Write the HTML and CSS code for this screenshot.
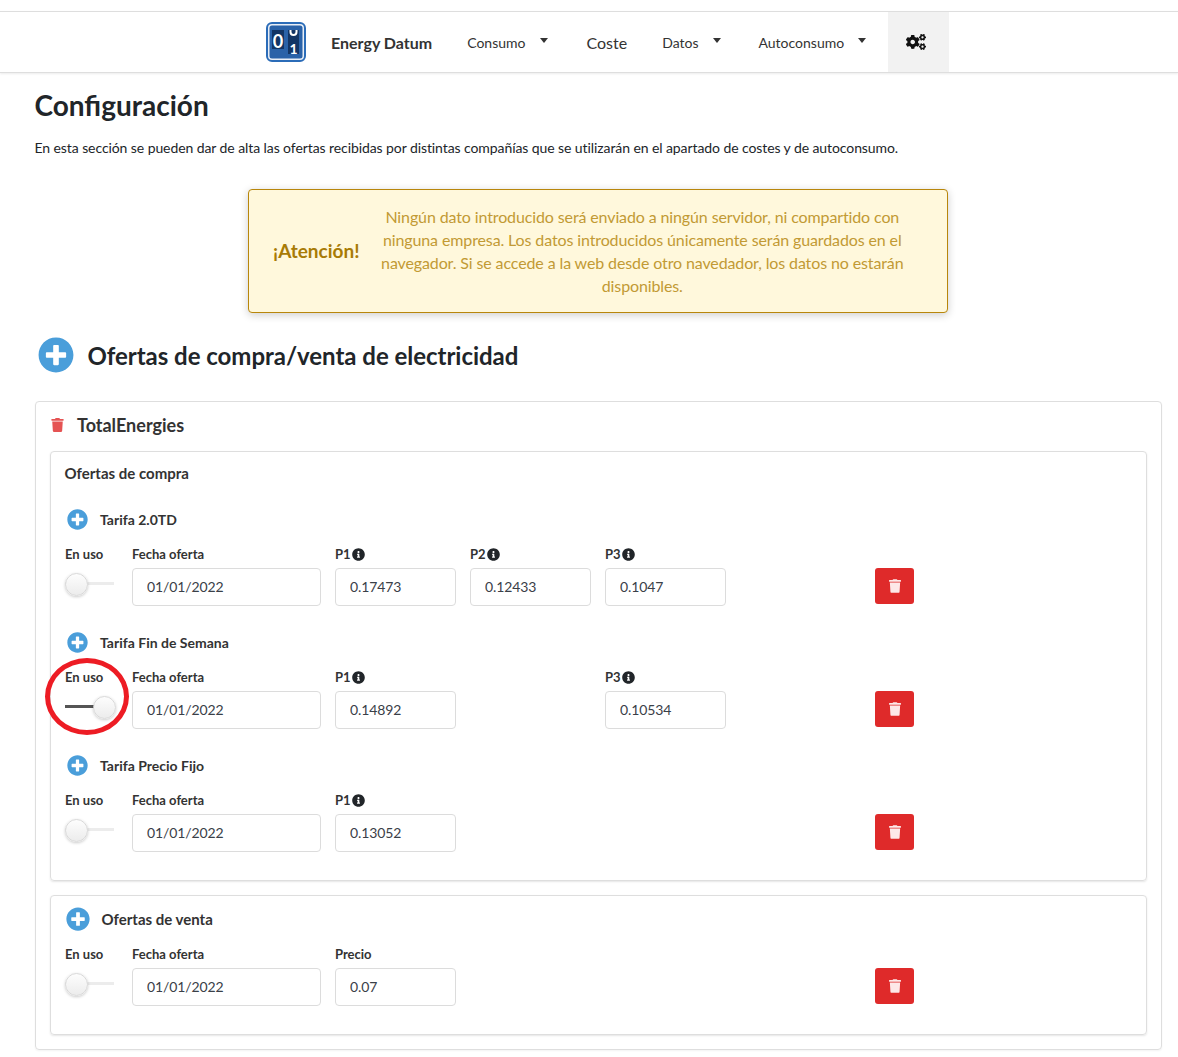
FILE: index.html
```html
<!DOCTYPE html>
<html lang="es">

<head>
    <title>Energy Datum - Configuración</title>
    <meta charset="utf-8">
    <link rel="stylesheet" href="styles.css">
</head>

<body>
    <svg class="defs" width="0" height="0">
        <symbol id="i-plus" viewBox="0 0 512 512"><path fill="currentColor" d="M256 8C119 8 8 119 8 256s111 248 248 248 248-111 248-248S393 8 256 8zm144 276c0 6.6-5.4 12-12 12h-92v92c0 6.6-5.4 12-12 12h-56c-6.6 0-12-5.4-12-12v-92h-92c-6.6 0-12-5.4-12-12v-56c0-6.6 5.4-12 12-12h92v-92c0-6.6 5.4-12 12-12h56c6.6 0 12 5.4 12 12v92h92c6.6 0 12 5.4 12 12v56z"/></symbol>
        <symbol id="i-trash" viewBox="0 0 448 512"><path fill="currentColor" d="M432 32H312l-9.4-18.7A24 24 0 0 0 281.1 0H166.8a23.72 23.72 0 0 0-21.4 13.3L136 32H16A16 16 0 0 0 0 48v32a16 16 0 0 0 16 16h416a16 16 0 0 0 16-16V48a16 16 0 0 0-16-16zM53.2 467a48 48 0 0 0 47.9 45h245.8a48 48 0 0 0 47.9-45L416 128H32z"/></symbol>
        <symbol id="i-info" viewBox="0 0 512 512"><path fill="currentColor" d="M256 8C119 8 8 119.1 8 256c0 137 111 248 248 248s248-111 248-248C504 119.1 393 8 256 8zm0 110c23.2 0 42 18.8 42 42s-18.8 42-42 42-42-18.8-42-42 18.8-42 42-42zm56 254c0 6.6-5.4 12-12 12h-88c-6.6 0-12-5.4-12-12v-24c0-6.6 5.4-12 12-12h12v-64h-12c-6.6 0-12-5.4-12-12v-24c0-6.6 5.4-12 12-12h64c6.6 0 12 5.4 12 12v100h12c6.6 0 12 5.4 12 12v24z"/></symbol>
    </svg>

    <nav class="navbar">
        <svg class="logo" width="40" height="40" viewBox="0 0 40 40">
            <rect x="1" y="1" width="38" height="38" rx="5" fill="#e8eef6" stroke="#2b6cb8" stroke-width="2"/>
            <rect x="3.5" y="3.5" width="33" height="33" rx="2.5" fill="#2a62a8"/>
            <rect x="6" y="8" width="12" height="19" fill="#123565"/>
            <rect x="22" y="8" width="11" height="24" fill="#123565"/>
            <text x="12" y="25.5" class="logo-digit" text-anchor="middle">0</text>
            <path d="M24.5 8v2a3 3 0 0 0 6 0V8" fill="none" stroke="#fff" stroke-width="2"/>
            <text x="27.5" y="31.5" class="logo-digit logo-digit-small" text-anchor="middle">1</text>
        </svg>
        <a class="brand" href="#">Energy Datum</a>
        <a class="nav-item nav-consumo" href="#">Consumo<span class="caret"></span></a>
        <a class="nav-item nav-coste" href="#">Coste</a>
        <a class="nav-item nav-datos" href="#">Datos<span class="caret"></span></a>
        <a class="nav-item nav-auto" href="#">Autoconsumo<span class="caret"></span></a>
        <a class="nav-config" href="#">
            <svg width="20" height="16" viewBox="0 0 640 512"><path fill="#111" d="M512.1 191l-8.2 14.3c-3 5.3-9.4 7.5-15.1 5.4-11.8-4.4-22.6-10.7-32.1-18.6-4.6-3.8-5.8-10.5-2.8-15.7l8.2-14.3c-6.9-8-12.3-17.3-15.9-27.4h-16.5c-6 0-11.2-4.3-12.2-10.3-2-12-2.1-24.6 0-37.1 1-6 6.2-10.4 12.2-10.4h16.5c3.6-10.1 9-19.4 15.9-27.4l-8.2-14.3c-3-5.2-1.9-11.9 2.8-15.7 9.5-7.9 20.4-14.2 32.1-18.6 5.7-2.1 12.1.1 15.1 5.4l8.2 14.3c10.5-1.9 21.2-1.9 31.7 0L552 6.3c3-5.3 9.4-7.5 15.1-5.4 11.8 4.4 22.6 10.7 32.1 18.6 4.6 3.8 5.8 10.5 2.8 15.7l-8.2 14.3c6.9 8 12.3 17.3 15.9 27.4h16.5c6 0 11.2 4.3 12.2 10.3 2 12 2.1 24.6 0 37.1-1 6-6.2 10.4-12.2 10.4h-16.5c-3.6 10.1-9 19.4-15.9 27.4l8.2 14.3c3 5.2 1.9 11.9-2.8 15.7-9.5 7.9-20.4 14.2-32.1 18.6-5.7 2.1-12.1-.1-15.1-5.4l-8.2-14.3c-10.4 1.9-21.2 1.9-31.7 0zm-10.5-58.8c38.5 29.6 82.4-14.3 52.8-52.8-38.5-29.7-82.4 14.3-52.8 52.8zM386.3 286.1l33.7 16.8c10.1 5.8 14.5 18.1 10.5 29.1-8.9 24.2-26.4 46.4-42.6 65.8-7.4 8.9-20.2 11.1-30.3 5.3l-29.1-16.8c-16 13.7-34.6 24.6-54.9 31.7v33.6c0 11.6-8.3 21.6-19.7 23.6-24.6 4.2-50.4 4.4-75.9 0-11.5-2-20-11.9-20-23.6V418c-20.3-7.2-38.9-18-54.9-31.7L74 403c-10 5.8-22.9 3.6-30.3-5.3-16.2-19.4-33.3-41.6-42.2-65.7-4-10.9.4-23.2 10.5-29.1l33.3-16.8c-3.9-20.9-3.9-42.4 0-63.4L12 205.8c-10.1-5.8-14.6-18.1-10.5-29 8.9-24.2 26-46.4 42.2-65.8 7.4-8.9 20.2-11.1 30.3-5.3l29.1 16.8c16-13.7 34.6-24.6 54.9-31.7V57.1c0-11.5 8.2-21.5 19.6-23.5 24.6-4.2 50.5-4.4 76-.1 11.5 2 20 11.9 20 23.6v33.6c20.3 7.2 38.9 18 54.9 31.7l29.1-16.8c10-5.8 22.9-3.6 30.3 5.3 16.2 19.4 33.2 41.6 42.1 65.8 4 10.9.1 23.2-10 29.1l-33.7 16.8c3.9 21 3.9 42.5 0 63.5zm-117.6 21.1c59.2-77-28.7-164.9-105.7-105.7-59.2 77 28.7 164.9 105.7 105.7zm243.4 182.7l-8.2 14.3c-3 5.3-9.4 7.5-15.1 5.4-11.8-4.4-22.6-10.7-32.1-18.6-4.6-3.8-5.8-10.5-2.8-15.7l8.2-14.3c-6.9-8-12.3-17.3-15.9-27.4h-16.5c-6 0-11.2-4.3-12.2-10.3-2-12-2.1-24.6 0-37.1 1-6 6.2-10.4 12.2-10.4h16.5c3.6-10.1 9-19.4 15.9-27.4l-8.2-14.3c-3-5.2-1.9-11.9 2.8-15.7 9.5-7.9 20.4-14.2 32.1-18.6 5.7-2.1 12.1.1 15.1 5.4l8.2 14.3c10.5-1.9 21.2-1.9 31.7 0l8.2-14.3c3-5.3 9.4-7.5 15.1-5.4 11.8 4.4 22.6 10.7 32.1 18.6 4.6 3.8 5.8 10.5 2.8 15.7l-8.2 14.3c6.9 8 12.3 17.3 15.9 27.4h16.5c6 0 11.2 4.3 12.2 10.3 2 12 2.1 24.6 0 37.1-1 6-6.2 10.4-12.2 10.4h-16.5c-3.6 10.1-9 19.4-15.9 27.4l8.2 14.3c3 5.2 1.9 11.9-2.8 15.7-9.5 7.9-20.4 14.2-32.1 18.6-5.7 2.1-12.1-.1-15.1-5.4l-8.2-14.3c-10.4 1.9-21.2 1.9-31.7 0zM501.6 431c38.5 29.6 82.4-14.3 52.8-52.8-38.5-29.6-82.4 14.3-52.8 52.8z"/></svg>
        </a>
    </nav>

    <main class="container">
        <h1>Configuración</h1>
        <p class="intro">En esta sección se pueden dar de alta las ofertas recibidas por distintas compañías que se utilizarán en el apartado de costes y de autoconsumo.</p>

        <div class="alert">
            <strong>¡Atención!</strong>
            <p>Ningún dato introducido será enviado a ningún servidor, ni compartido con ninguna empresa. Los datos introducidos únicamente serán guardados en el navegador. Si se accede a la web desde otro navedador, los datos no estarán disponibles.</p>
        </div>

        <div class="section-title">
            <svg class="plus plus-big"><use href="#i-plus"/></svg>
            <h2>Ofertas de compra/venta de electricidad</h2>
        </div>

        <section class="card">
            <div class="card-head">
                <svg class="trash-red"><use href="#i-trash"/></svg>
                <h3>TotalEnergies</h3>
            </div>

            <div class="panel panel-buy">
                <h4>Ofertas de compra</h4>

                <div class="tariff">
                    <svg class="plus"><use href="#i-plus"/></svg>
                    <h5>Tarifa 2.0TD</h5>
                </div>
                <div class="offer">
                    <div class="field"><label>En uso</label><span class="switch"></span></div>
                    <div class="field"><label>Fecha oferta</label><input type="text" value="01/01/2022"></div>
                    <div class="field"><label>P1<svg class="info"><use href="#i-info"/></svg></label><input type="text" value="0.17473"></div>
                    <div class="field"><label>P2<svg class="info"><use href="#i-info"/></svg></label><input type="text" value="0.12433"></div>
                    <div class="field"><label>P3<svg class="info"><use href="#i-info"/></svg></label><input type="text" value="0.1047"></div>
                    <button class="btn-delete"><svg><use href="#i-trash"/></svg></button>
                </div>

                <div class="tariff">
                    <svg class="plus"><use href="#i-plus"/></svg>
                    <h5>Tarifa Fin de Semana</h5>
                </div>
                <div class="offer">
                    <div class="field field-marked">
                        <label>En uso</label><span class="switch switch-on"></span>
                        <span class="red-circle"></span>
                    </div>
                    <div class="field"><label>Fecha oferta</label><input type="text" value="01/01/2022"></div>
                    <div class="field"><label>P1<svg class="info"><use href="#i-info"/></svg></label><input type="text" value="0.14892"></div>
                    <div class="field field-empty"></div>
                    <div class="field"><label>P3<svg class="info"><use href="#i-info"/></svg></label><input type="text" value="0.10534"></div>
                    <button class="btn-delete"><svg><use href="#i-trash"/></svg></button>
                </div>

                <div class="tariff">
                    <svg class="plus"><use href="#i-plus"/></svg>
                    <h5>Tarifa Precio Fijo</h5>
                </div>
                <div class="offer">
                    <div class="field"><label>En uso</label><span class="switch"></span></div>
                    <div class="field"><label>Fecha oferta</label><input type="text" value="01/01/2022"></div>
                    <div class="field"><label>P1<svg class="info"><use href="#i-info"/></svg></label><input type="text" value="0.13052"></div>
                    <div class="field field-empty"></div>
                    <div class="field field-empty"></div>
                    <button class="btn-delete"><svg><use href="#i-trash"/></svg></button>
                </div>
            </div>

            <div class="panel panel-sell">
                <div class="sell-head">
                    <svg class="plus plus-mid"><use href="#i-plus"/></svg>
                    <h4>Ofertas de venta</h4>
                </div>
                <div class="offer offer-sell">
                    <div class="field"><label>En uso</label><span class="switch"></span></div>
                    <div class="field"><label>Fecha oferta</label><input type="text" value="01/01/2022"></div>
                    <div class="field"><label>Precio</label><input type="text" value="0.07"></div>
                    <div class="field field-empty"></div>
                    <div class="field field-empty"></div>
                    <button class="btn-delete"><svg><use href="#i-trash"/></svg></button>
                </div>
            </div>
        </section>
    </main>
</body>

</html>
```

FILE: styles.css
```css
* { box-sizing: border-box; }
html, body { height: 1057px; overflow: hidden; }
body { margin: 0; padding-top: 11px; font-family: Lato, "Liberation Sans", sans-serif; color: #212529; background: #fff; }
h1, h2, h3, h4, h5, p { margin: 0; }
a { text-decoration: none; color: #212529; }
.defs { display: block; height: 0; }

/* navbar */
.navbar { display: flex; align-items: center; height: 62px; padding-left: 266px; background: #fff; border-top: 1px solid #dedede; border-bottom: 1px solid #dedede; box-shadow: 0 1px 2px rgba(0,0,0,.08); }
.logo { flex: none; }
.logo-digit { font-family: Lato, sans-serif; font-size: 18px; font-weight: 700; fill: #fff; }
.logo-digit-small { font-size: 14px; }
.brand { margin-left: 25px; font-size: 16px; font-weight: 700; color: #333; }
.nav-item { display: flex; align-items: center; font-size: 14px; color: #333; }
.nav-consumo { margin-left: 35px; }
.nav-coste { margin-left: 39px; font-size: 16px; }
.nav-datos { margin-left: 35px; }
.nav-auto { margin-left: 38px; }
.caret { width: 0; height: 0; margin-left: 14px; margin-top: -3px; border-left: 4.5px solid transparent; border-right: 4.5px solid transparent; border-top: 5px solid #333; }
.nav-config { display: flex; align-items: center; justify-content: center; align-self: stretch; width: 61px; margin-left: 22px; padding-right: 5px; background: #f2f2f2; }

/* content */
.container { padding: 0 16px 0 35px; }
h1 { margin-top: 15px; font-size: 28px; line-height: 34px; font-weight: 700; margin-left: -0.5px; }
.intro { margin-top: 15px; margin-left: -0.5px; font-size: 14px; line-height: 21px; letter-spacing: -0.084px; }

.alert { display: flex; align-items: center; width: 700px; height: 124px; margin: 31px 0 0 213px; padding: 16px 37px 16px 24px; background: #fff8dc; border: 1px solid #b8860b; border-radius: 4px; box-shadow: 0 2px 8px rgba(0,0,0,.2); color: #b8860b; }
.alert strong { flex: none; margin-top: -2px; font-size: 19px; color: #a87b06; }
.alert p { flex: 1; margin-left: 15px; text-align: center; font-size: 16px; line-height: 23px; letter-spacing: -0.12px; color: #c29a34; }

.section-title { display: flex; align-items: center; margin-top: 23px; height: 38px; padding-left: 3px; }
.section-title h2 { margin-left: 13.5px; font-size: 24px; font-weight: 700; letter-spacing: -0.03px; }

.plus { flex: none; width: 21px; height: 21px; color: #4a9eda; }
.plus-big { width: 36px; height: 36px; }
.plus-mid { width: 24px; height: 24px; }

.card { width: 1127px; height: 649px; margin-top: 27px; padding: 0 14px; border: 1px solid #dedede; border-radius: 4px; box-shadow: 0 1px 2px rgba(0,0,0,.05); }
.card-head { display: flex; align-items: center; height: 45px; margin-bottom: 4px; padding-left: 1px; }
.card-head h3 { margin-left: 13px; font-size: 18px; font-weight: 700; color: #333; }
.trash-red { width: 13px; height: 14px; color: #e55353; }

.panel { border: 1px solid #dedede; border-radius: 4px; padding: 0 14px; box-shadow: 0 1px 2px rgba(0,0,0,.1); }
.panel-buy { height: 430px; }
.panel-sell { height: 140px; margin-top: 14px; }
.panel h4 { font-size: 15px; font-weight: 700; color: #333; }
.panel-buy h4 { margin-top: 11px; margin-left: -0.5px; line-height: 20px; }
.sell-head { display: flex; align-items: center; gap: 11.5px; height: 24px; margin-top: 11px; padding-left: 1px; }

.tariff { display: flex; align-items: center; gap: 12px; height: 22px; margin-top: 25px; padding-left: 2px; }
.tariff h5 { font-size: 14px; font-weight: 700; color: #333; }

.offer { display: grid; grid-template-columns: 53px 189px 121px 121px 121px 39px; column-gap: 14px; margin-top: 15px; position: relative; }
.offer-sell { margin-top: 14px; }
.field { display: flex; flex-direction: column; }
.field label { display: flex; align-items: center; height: 18px; font-size: 13px; font-weight: 700; color: #333; margin-bottom: 5px; }
.info { width: 13px; height: 13px; margin-left: 1px; color: #212529; }
input { width: 100%; height: 38px; padding: 0 14px 2px; font: 400 14px Lato, sans-serif; letter-spacing: -0.1px; color: #3a4048; background: #fff; border: 1px solid #dcdcdc; border-radius: 4px; }

/* the little toggle */
.switch { position: relative; display: block; width: 49px; height: 22px; margin-top: 4px; }
.switch::before { content: ""; position: absolute; left: 0; right: 0; top: 10px; height: 3px; background: #ececec; }
.switch::after { content: ""; position: absolute; left: 0; top: 1px; width: 21px; height: 21px; border-radius: 50%; background: linear-gradient(#fdfdfd, #ececec); border: 1px solid #d8d8d8; box-shadow: 0 1px 3px rgba(0,0,0,.2); }
.switch-on::before { background: #555; }
.switch-on::after { left: 28px; }

.btn-delete { display: flex; align-items: center; justify-content: center; width: 39px; height: 36px; margin: 23px 0 0 135px; padding: 0; background: #df2a2a; border: none; border-radius: 3px; color: #fde8e8; }
.btn-delete svg { width: 12px; height: 14px; }

/* red hand-drawn mark over the switch */
.field-marked { position: relative; }
.red-circle { position: absolute; left: -20px; top: -10px; width: 84px; height: 77px; border: 5px solid #ed1c24; border-radius: 50%; pointer-events: none; }
```
